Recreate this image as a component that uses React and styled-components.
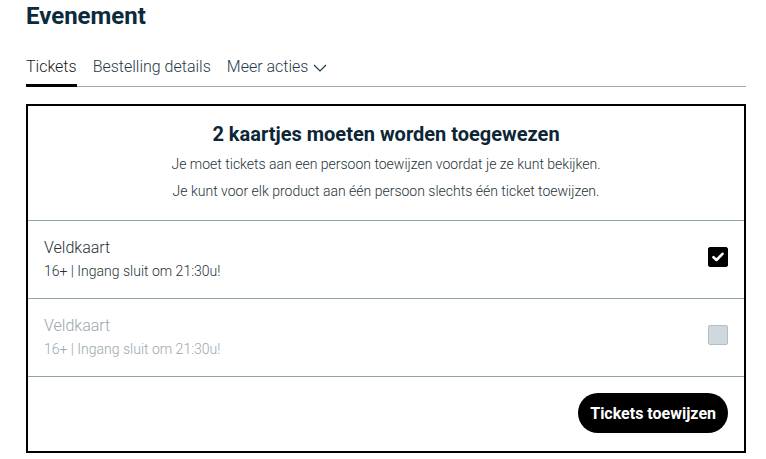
import React from "react";
import styled, { createGlobalStyle } from "styled-components";

const Global = createGlobalStyle`
  html, body { margin: 0; padding: 0; background: #fff; }
  body { font-family: Roboto, "Liberation Sans", Arial, sans-serif; color: #263238; }
  * { box-sizing: border-box; }
`;

const Page = styled.div`
  width: 720px;
  margin-left: 26px;
  padding-top: 2px;
`;

const Title = styled.h1`
  margin: 0;
  font-size: 24px;
  line-height: 28px;
  font-weight: 700;
  color: #0b2a3c;
`;

const TabBar = styled.nav`
  margin-top: 25px;
  display: flex;
  gap: 16px;
  border-bottom: 1px solid #a3a8ab;
`;

const Tab = styled.div`
  display: flex;
  align-items: center;
  gap: 5px;
  font-size: 16px;
  line-height: 24px;
  font-weight: 300;
  color: ${(p) => (p.$active ? "#1a1a1a" : "#1f3a4a")};
  padding-bottom: 5px;
  border-bottom: 3px solid ${(p) => (p.$active ? "#000" : "transparent")};
  margin-bottom: -1px;
  cursor: pointer;
`;

const Chevron = styled.svg`
  width: 14px;
  height: 14px;
  margin-top: 2px;
`;

const Card = styled.section`
  margin-top: 17px;
  border: 2px solid #000;
  width: 720px;
`;

const Header = styled.div`
  padding: 16px 16px 20px;
  text-align: center;
  border-bottom: 1px solid #90a4ae;
`;

const Heading = styled.h2`
  margin: 0 0 9px;
  font-size: 20px;
  line-height: 24px;
  font-weight: 700;
  color: #0d2636;
`;

const Note = styled.p`
  margin: 0 0 9px;
  font-size: 14px;
  line-height: 18px;
  font-weight: 300;
  color: #263238;
  &:last-child { margin-bottom: 0; }
`;

const Row = styled.div`
  display: flex;
  align-items: center;
  justify-content: space-between;
  padding: 17px 16px 18px;
  border-bottom: 1px solid #90a4ae;
`;

const Info = styled.div`
  display: flex;
  flex-direction: column;
  gap: 4px;
`;

const Name = styled.div`
  font-size: 16px;
  line-height: 20px;
  font-weight: 300;
  color: ${(p) => (p.$disabled ? "#9aa7ad" : "#263238")};
`;

const Sub = styled.div`
  font-size: 14px;
  line-height: 18px;
  font-weight: 300;
  color: ${(p) => (p.$disabled ? "#9aa7ad" : "#263238")};
`;

const Check = styled.span`
  width: 20px;
  height: 20px;
  border-radius: 2px;
  display: flex;
  align-items: center;
  justify-content: center;
  margin-bottom: 5px;
  background: ${(p) => (p.$checked ? "#000" : "#cfd8dc")};
  border: 1px solid ${(p) => (p.$checked ? "#000" : "#b0bec5")};
`;

const Footer = styled.div`
  display: flex;
  justify-content: flex-end;
  padding: 16px 16px 18px;
`;

const Button = styled.button`
  height: 40px;
  padding: 0 12px;
  border: none;
  border-radius: 20px;
  background: #000;
  color: #fff;
  font-family: Roboto, "Liberation Sans", Arial, sans-serif;
  font-size: 16px;
  font-weight: 700;
  cursor: pointer;
`;

const tickets = [
  { name: "Veldkaart", sub: "16+ | Ingang sluit om 21:30u!", checked: true },
  { name: "Veldkaart", sub: "16+ | Ingang sluit om 21:30u!", checked: false },
];

export default function App() {
  return (
    <>
      <Global />
      <Page>
        <Title>Evenement</Title>
        <TabBar>
          <Tab $active>Tickets</Tab>
          <Tab>Bestelling details</Tab>
          <Tab>
            Meer acties
            <Chevron viewBox="0 0 14 14" fill="none" stroke="#1f3a4a" strokeWidth="1.2">
              <polyline points="1,4 7,10 13,4" />
            </Chevron>
          </Tab>
        </TabBar>
        <Card>
          <Header>
            <Heading>2 kaartjes moeten worden toegewezen</Heading>
            <Note>Je moet tickets aan een persoon toewijzen voordat je ze kunt bekijken.</Note>
            <Note>Je kunt voor elk product aan één persoon slechts één ticket toewijzen.</Note>
          </Header>
          {tickets.map((t, i) => (
            <Row key={i}>
              <Info>
                <Name $disabled={!t.checked}>{t.name}</Name>
                <Sub $disabled={!t.checked}>{t.sub}</Sub>
              </Info>
              <Check $checked={t.checked}>
                {t.checked && (
                  <svg width="12" height="10" viewBox="0 0 12 10">
                    <polyline points="1.5,5.2 4.5,8 10.5,1.8" fill="none" stroke="#fff" strokeWidth="2.6" strokeLinecap="round" strokeLinejoin="round" />
                  </svg>
                )}
              </Check>
            </Row>
          ))}
          <Footer>
            <Button>Tickets toewijzen</Button>
          </Footer>
        </Card>
      </Page>
    </>
  );
}
